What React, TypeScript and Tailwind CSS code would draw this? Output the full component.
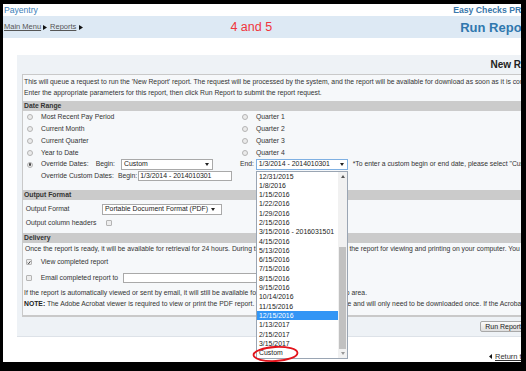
import React from "react";

const dates = [
  "12/31/2015",
  "1/8/2016",
  "1/15/2016",
  "1/22/2016",
  "1/29/2016",
  "2/15/2016",
  "3/15/2016 - 2016031501",
  "4/15/2016",
  "5/13/2016",
  "6/15/2016",
  "7/15/2016",
  "8/15/2016",
  "9/15/2016",
  "10/14/2016",
  "11/15/2016",
  "12/15/2016",
  "1/13/2017",
  "2/15/2017",
  "3/15/2017",
  "Custom",
];

const Radio = ({ checked = false }: { checked?: boolean }) => (
  <span className="w-[6px] h-[6px] rounded-full border border-[#b4b4b4] bg-[#ebebeb] flex items-center justify-center shrink-0">
    {checked && <span className="w-[2.5px] h-[2.5px] rounded-full bg-[#4a4a4a]" />}
  </span>
);

const Check = ({ checked = false }: { checked?: boolean }) => (
  <span className="w-[6px] h-[6px] rounded-[1px] border border-[#b4b4b4] bg-[#ededed] flex items-center justify-center shrink-0">
    {checked && (
      <svg width="5" height="5" viewBox="0 0 10 10">
        <path d="M1.5 5.5 L4 8 L8.5 2" stroke="#333" strokeWidth="2.2" fill="none" />
      </svg>
    )}
  </span>
);

const Caret = () => (
  <svg width="4" height="3" viewBox="0 0 4 3" className="shrink-0">
    <path d="M0 0H4L2 3Z" fill="#222" />
  </svg>
);

const Select = ({ value, className }: { value: string; className: string }) => (
  <div className={`h-[11px] bg-white border flex items-center justify-between pl-[2px] pr-[3px] text-[6.9px] text-[#222] shrink-0 ${className}`}>
    <span className="whitespace-nowrap leading-none">{value}</span>
    <Caret />
  </div>
);

const Bar = ({ title }: { title: string }) => (
  <div className="h-[10px] bg-[#cbcbcb] flex items-center pl-[1px] font-bold text-[#333]">{title}</div>
);

const Arrow = () => (
  <svg width="4" height="5" viewBox="0 0 4 5" className="shrink-0">
    <path d="M0 0L4 2.5L0 5Z" fill="#111" />
  </svg>
);

const RadioRow = ({ label, pad }: { label: string; pad: string }) => (
  <div className={`h-[11.9px] flex items-center ${pad}`}>
    <Radio />
    <span className="ml-[8px] whitespace-nowrap">{label}</span>
  </div>
);

export default function App() {
  return (
    <div className="w-[526px] h-[371px] bg-black pt-[4px] pl-[3px] font-['Liberation_Sans',Arial,sans-serif] text-[#333]">
      <div className="relative w-[518px] h-[358px] bg-white overflow-hidden">
        <div className="w-[545px]">
          {/* top line */}
          <div className="h-[12px] flex items-center justify-between pl-[1px] pr-[20px]">
            <span className="text-[8.6px] text-[#3d80b8] leading-none">Payentry</span>
            <span className="text-[8.7px] font-bold text-[#3a78ab] leading-none">Easy Checks PRO</span>
          </div>

          {/* breadcrumb bar */}
          <div className="h-[22px] bg-[#dde9f4] flex items-center pl-[1px] pr-[17px]">
            <span className="text-[7.5px] underline text-[#555] leading-none">Main Menu</span>
            <span className="ml-[2px] mr-[3px]"><Arrow /></span>
            <span className="text-[7.5px] underline text-[#555] leading-none">Reports</span>
            <span className="ml-[3px]"><Arrow /></span>
            <span className="ml-[147px] text-[12.5px] text-[#f0343c] leading-none">4 and 5</span>
            <span className="ml-auto text-[13px] font-bold text-[#2f77ae] leading-none">Run Report</span>
          </div>

          {/* report panel */}
          <div className="mt-[17px] ml-[14px] w-[531px] bg-[#eef2f6] border-b border-[#dde2e8]">
            <div className="h-[19px] flex items-center justify-end pr-[2px] text-[10px] font-bold text-[#222]">New Report</div>

            <div className="ml-[5px] border-l border-t border-b-2 border-[#c9c9c9] bg-[#f6f8fa] text-[6.8px]">
              <div className="pt-[2px] pl-[1px] leading-[10.5px] whitespace-nowrap">
                <p>This will queue a request to run the 'New Report' report. The request will be processed by the system, and the report will be available for download as soon as it is complete.</p>
                <p>Enter the appropriate parameters for this report, then click Run Report to submit the report request.</p>
              </div>

              <div className="mt-[3px]"><Bar title="Date Range" /></div>
              <div className="grid grid-cols-[217px_1fr]">
                <div>
                  <RadioRow label="Most Recent Pay Period" pad="pl-[4px]" />
                  <RadioRow label="Current Month" pad="pl-[4px]" />
                  <RadioRow label="Current Quarter" pad="pl-[4px]" />
                  <RadioRow label="Year to Date" pad="pl-[4px]" />
                  <div className="h-[11.9px] flex items-center pl-[4px]">
                    <Radio checked />
                    <span className="ml-[8px] w-[54.7px] whitespace-nowrap">Override Dates:</span>
                    <span className="w-[25.3px]">Begin:</span>
                    <Select value="Custom" className="w-[92px] border-[#a9a9a9]" />
                  </div>
                  <div className="h-[11.9px] flex items-center pl-[18px]">
                    <span className="whitespace-nowrap">Override Custom Dates:</span>
                    <span className="ml-[4px]">Begin:</span>
                    <div className="ml-[1px] w-[94px] h-[10px] bg-white border border-[#a9a9a9] flex items-center pl-[1px] text-[6.9px] text-[#222] whitespace-nowrap">1/3/2014 - 2014010301</div>
                  </div>
                </div>
                <div>
                  <RadioRow label="Quarter 1" pad="pl-[2px]" />
                  <RadioRow label="Quarter 2" pad="pl-[2px]" />
                  <RadioRow label="Quarter 3" pad="pl-[2px]" />
                  <RadioRow label="Quarter 4" pad="pl-[2px]" />
                  <div className="h-[11.9px] flex items-center">
                    <span className="w-[15.7px]">End:</span>
                    <Select value="1/3/2014 - 2014010301" className="w-[92px] border-[#7fb0e2]" />
                    <span className="ml-[5px] whitespace-nowrap">*To enter a custom begin or end date, please select "Custom" from the list.</span>
                  </div>
                  <div className="h-[11.9px]" />
                </div>
              </div>

              <div className="mt-[7.6px]"><Bar title="Output Format" /></div>
              <div className="pt-[2.5px] pb-[2.5px] pl-[2.7px]">
                <div className="h-[14px] flex items-center">
                  <span className="w-[76.3px] whitespace-nowrap">Output Format</span>
                  <Select value="Portable Document Format (PDF)" className="w-[120px] border-[#a9a9a9] justify-start gap-[3px]" />
                </div>
                <div className="h-[14px] flex items-center">
                  <span className="w-[80px] whitespace-nowrap">Output column headers</span>
                  <Check />
                </div>
              </div>

              <Bar title="Delivery" />
              <div className="h-[12px] flex items-center pl-[2px] whitespace-nowrap">
                Once the report is ready, it will be available for retrieval for 24 hours. During this time you will be able to pull the report for viewing and printing on your computer. You can also have it sent by email.
              </div>
              <div className="h-[15px] flex items-center pl-[3px]">
                <Check checked />
                <span className="ml-[8.7px] whitespace-nowrap">View completed report</span>
              </div>
              <div className="h-[16px] flex items-center pl-[3px]">
                <Check />
                <span className="ml-[8.7px] whitespace-nowrap">Email completed report to</span>
                <div className="ml-[5px] w-[200px] h-[10px] bg-white border border-[#a9a9a9]" />
              </div>
              <div className="mt-[1.5px] mb-[5.5px] pl-[1px] leading-[11px] whitespace-nowrap">
                <p>If the report is automatically viewed or sent by email, it will still be available for 24 hours in the Report Pickup area.</p>
                <p>
                  <b className="text-[#222]">NOTE:</b> The Adobe Acrobat viewer is required to view or print the PDF report. The Adobe viewer is free to use and will only need to be downloaded once. If the Acrobat viewer is not installed, click here.
                </p>
              </div>
            </div>

            <div className="h-[19px] flex items-center justify-end pr-[22px]">
              <button className="h-[11px] px-[4px] border border-[#a8a8a8] rounded-[2px] bg-gradient-to-b from-[#fbfbfb] to-[#dedede] text-[7px] leading-none text-[#222]">
                Run Report
              </button>
            </div>
          </div>

          {/* return link */}
          <div className="h-[25px] flex items-end pl-[486px] pb-[0.5px]">
            <div className="flex items-center gap-[3px] h-[9px]">
              <svg width="3" height="5" viewBox="0 0 3 5" className="shrink-0">
                <path d="M3 0L0 2.5L3 5Z" fill="#111" />
              </svg>
              <span className="text-[7.5px] underline text-[#333] leading-none whitespace-nowrap">Return to Reports</span>
            </div>
          </div>
        </div>

        {/* open date list for End select */}
        <div className="absolute left-[252.5px] top-[166.5px] w-[92.5px] h-[188px] bg-white border border-[#9aa5b3] flex text-[6.9px] text-[#222]">
          <div className="flex-1 flex flex-col">
            {dates.map((d) => (
              <div
                key={d}
                className={`h-[9.3px] leading-[9.3px] pl-[2.5px] whitespace-nowrap ${d === "12/15/2016" ? "bg-[#3295f5] text-white" : ""}`}
              >
                {d}
              </div>
            ))}
          </div>
          <div className="w-[9px] flex flex-col bg-[#f1f1f1]">
            <div className="h-[9px] flex items-center justify-center">
              <svg width="4" height="3" viewBox="0 0 4 3"><path d="M0 3H4L2 0Z" fill="#555" /></svg>
            </div>
            <div className="flex-1" />
            <div className="h-[102px] mx-[1px] bg-[#c1c1c1]" />
            <div className="h-[9px] flex items-center justify-center">
              <svg width="4" height="3" viewBox="0 0 4 3"><path d="M0 0H4L2 3Z" fill="#999" /></svg>
            </div>
          </div>
        </div>

        {/* hand-drawn highlight around Custom */}
        <svg className="absolute left-[248px] top-[341px]" width="50" height="18" viewBox="0 0 50 18">
          <ellipse cx="24.5" cy="9" rx="22" ry="7" fill="none" stroke="#e3141c" strokeWidth="1.8" transform="rotate(-3 24.5 9)" />
        </svg>
      </div>
    </div>
  );
}
